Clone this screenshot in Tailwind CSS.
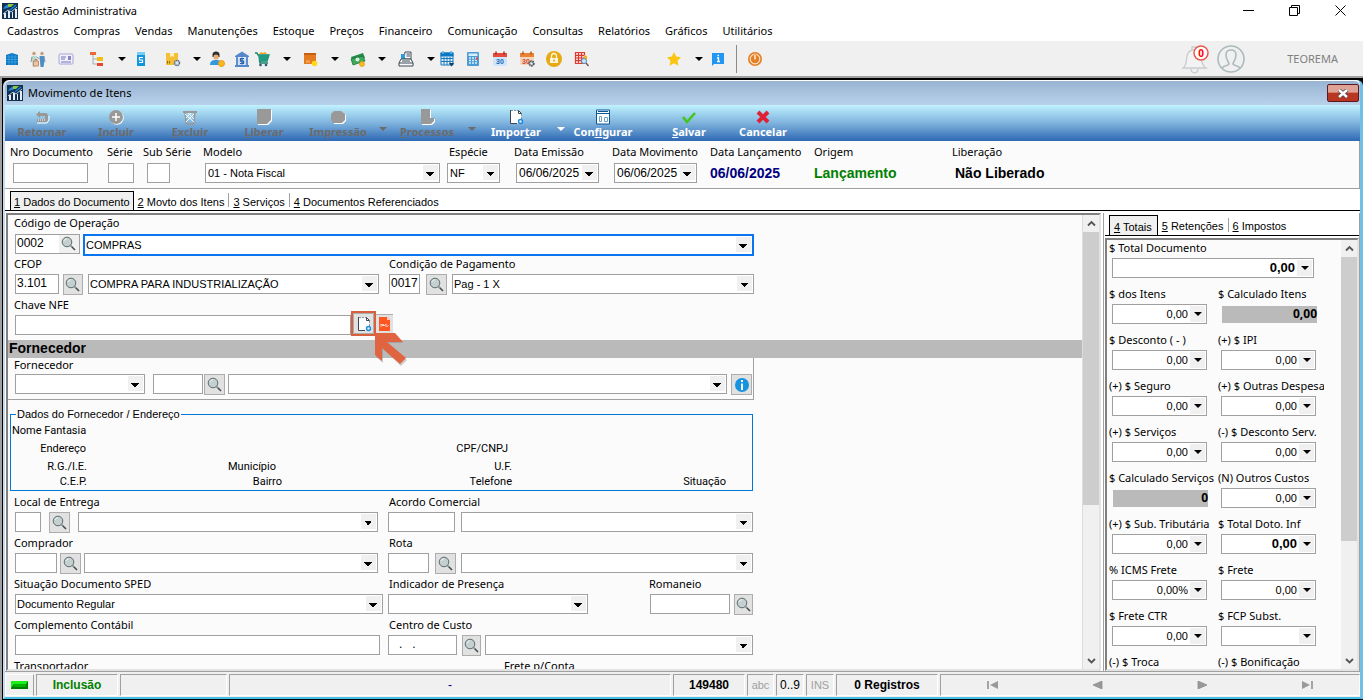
<!DOCTYPE html>
<html lang="pt-BR">
<head>
<meta charset="utf-8">
<meta name="viewport" content="width=device-width, initial-scale=1">
<title>Gestão Administrativa</title>
<script src="https://cdn.jsdelivr.net/npm/@tailwindcss/browser@4"></script>
</head>
<body class="flex h-screen flex-col overflow-hidden bg-white font-['Noto_Sans',sans-serif] text-[11px] leading-4 text-black">

<!-- Shared icons -->
<svg class="hidden">
  <symbol id="lupa" viewBox="0 0 16 16"><path d="M10 10l4 4" stroke="#3f4c50" stroke-width="1.600"/><path d="M9.500 9.500l1.500 1.500" stroke="#8b9699" stroke-width="1.600"/><circle cx="6" cy="6" r="4.800" fill="#c4d0d0" stroke="#5c6a6c"/><path d="M3 5a3.500 3.500 0 0 1 3-2.300" stroke="#eef4f4" fill="none"/></symbol>
  <symbol id="seta" viewBox="0 0 8 4"><path d="M0 0h8L4 4z" fill="currentColor"/></symbol>
  <symbol id="logo" viewBox="0 0 16 16"><path d="M0 0h16v16H0z" fill="#12304f"/><path d="M1 6c2-4 5-5 9-5l-4 4z" fill="#2686dc"/><path d="M6 1h6L9 4H6z" fill="#8dc63f"/><path d="M8 7l6-5" stroke="#0a84d8" stroke-width="1.500"/><path d="M2 15v-5h2v5zM6 15V8h2v7zM10 15V9h1v6zM13 15V6h2v9z" fill="#e6edf4"/><path d="M1 11l5-4 3 2 6-5" stroke="#b8cbdc" fill="none"/></symbol>
  <symbol id="cima" viewBox="0 0 9 9"><path d="M1 6.500L4.500 3 8 6.500" fill="none" stroke="#555" stroke-width="1.800"/></symbol>
  <symbol id="baixo" viewBox="0 0 9 9"><path d="M1 3l3.500 3.500L8 3" fill="none" stroke="#555" stroke-width="1.800"/></symbol>
  <symbol id="folha" viewBox="0 0 16 16"><path d="M2.500 1.500h8l3 3v10h-11z" fill="#fff"/><path d="M2.500 1v13.500H9" fill="none" stroke="#3d4650"/><path d="M3 1.500h7M13.500 5v5" stroke="#8a939c" stroke-dasharray="2 1"/><path d="M10.500 1.500v3h3z" fill="#fff" stroke="#3d4650"/><circle cx="12.500" cy="12.500" r="2" fill="#d8efff" stroke="#1e88d8" stroke-width="1.400"/></symbol>
</svg>

<!-- Application title bar -->
<header class="flex h-[22px] shrink-0 items-center justify-between pl-0.5">
  <h1 class="flex items-center gap-[5px]"><svg class="size-4"><use href="#logo"/></svg>Gestão Administrativa</h1>
  <div class="flex pb-0.5 [&_button]:grid [&_button]:h-5 [&_button]:w-[46px] [&_button]:place-items-center">
    <button aria-label="Minimizar"><svg class="size-[11px]" viewBox="0 0 11 11"><path d="M0 5.500h11" stroke="#000"/></svg></button>
    <button aria-label="Restaurar"><svg class="size-[11px]" viewBox="0 0 11 11"><path d="M.5 2.500h8v8h-8zM2.500 2V.500h8v8H9" fill="none" stroke="#000"/></svg></button>
    <button aria-label="Fechar"><svg class="size-[11px]" viewBox="0 0 11 11"><path d="M.5.500l10 10M10.500.500l-10 10" stroke="#000"/></svg></button>
  </div>
</header>

<nav class="flex h-[19px] shrink-0 items-center gap-[15px] pb-px pl-[7px]">
  <button>Cadastros</button><button>Compras</button><button>Vendas</button><button>Manutenções</button><button>Estoque</button><button>Preços</button><button>Financeiro</button><button>Comunicação</button><button>Consultas</button><button>Relatórios</button><button>Gráficos</button><button>Utilitários</button>
</nav>

<!-- Icon toolbar -->
<div class="flex h-[35px] shrink-0 items-center bg-[#f0f0f0] pl-0.5 [&_button]:grid [&_button]:h-5 [&_button]:w-5 [&_button]:shrink-0 [&_button]:place-items-center [&_button>svg]:size-4 [&_button.m]:w-3 [&_button.m>svg]:h-1 [&_button.m>svg]:w-2">
  <button aria-label="Empresa"><svg viewBox="0 0 16 16"><path d="M2 4l6-2 6 2v10H2z" fill="#0b76c4"/><path d="M2 6h12M2 8.500h12M2 11h12M5 4v10M8 3v11M11 4v10" stroke="#4db1ee" stroke-width=".6"/></svg></button>
  <button class="ml-1.5" aria-label="Clientes"><svg viewBox="0 0 16 16"><circle cx="4" cy="2.500" r="1.700" fill="#c99b74"/><circle cx="12" cy="2.500" r="1.700" fill="#c99b74"/><path d="M1.500 5h5v5l-1 6h-3z" fill="#b9dbc9"/><path d="M9.500 5h5v5l-1 6h-3z" fill="#4c8fc2"/><path d="M6.500 6l3 2M14 6l1 5M2 6l-1 5" stroke="#7f94a8"/><path d="M3.500 10h5v5h-5z" fill="#eac3a8" stroke="#c07a5a" stroke-width=".8"/><path d="M5 10V8.500h2V10" fill="none" stroke="#c07a5a"/></svg></button>
  <button class="ml-2" aria-label="Cartão"><svg viewBox="0 0 16 16"><rect x="1" y="3" width="14" height="10" rx="1" fill="#f2f1fb" stroke="#a8a4d4"/><path d="M3 6h5M3 8h4M3 11h10" stroke="#7470ba"/><path d="M10 5h3v4h-3z" fill="#8983cc"/></svg></button>
  <button class="ml-[11px]" aria-label="Estrutura"><svg viewBox="0 0 16 16"><path d="M4 4v9h4M4 8h5" fill="none" stroke="#a4adb5"/><path d="M1 1h6v3H1z" fill="#ed6a35"/><path d="M8 6h6v4H8z" fill="#f4bd15"/><path d="M8 12h6v3H8z" fill="#e3472c"/></svg></button>
  <button class="m ml-[9px]" aria-label="Mais opções de estrutura"><svg><use href="#seta"/></svg></button>
  <button class="ml-[3px]" aria-label="Serviços"><svg viewBox="0 0 16 16"><path d="M4 1h8v3H4z" fill="#77cdf3"/><path d="M4 4h8v11H4z" fill="#1295df"/><path d="M10 6.500H6.500V9h3v2.500H6" fill="none" stroke="#fff" stroke-width="1.200"/></svg></button>
  <button class="ml-3" aria-label="Produtos"><svg viewBox="0 0 16 16"><path d="M1 2h12v12H1z" fill="#f3bf38"/><path d="M5 2h4v4l-2-1-2 1z" fill="#fff0b7"/><path d="M2.500 12.500V10M4.500 12.500V10" stroke="#8f6a12"/><circle cx="12" cy="12" r="2.500" fill="#dbe6f2" stroke="#5d7288" stroke-width="1.500" stroke-dasharray="1.500 .5"/></svg></button>
  <button class="m ml-2" aria-label="Mais opções de produtos"><svg><use href="#seta"/></svg></button>
  <button class="ml-1" aria-label="Usuário financeiro"><svg viewBox="0 0 16 16"><path d="M3.500 6V3.500C3.500 1.500 5 .5 7 .5s3.500 1 3.500 3V6z" fill="#303030"/><circle cx="7" cy="6" r="2.600" fill="#e7ae78"/><path d="M1 14c0-4 2.500-5 6-5s6 1 6 5z" fill="#3299dc"/><circle cx="12.500" cy="12.500" r="3" fill="#f9b820" stroke="#e99b10"/></svg></button>
  <button class="ml-[5px]" aria-label="Banco"><svg viewBox="0 0 16 16"><path d="M1 5l7-4.500L15 5v1H1z" fill="#5487cc"/><path d="M2 7h12v7H2z" fill="#cfe1f6"/><path d="M3 6v8M13 6v8M1 15h14" stroke="#5487cc" stroke-width="1.800"/><path d="M10 7.500H6.500v2.700h3v2.300H6M8 6.500v7" fill="none" stroke="#2862ae" stroke-width="1.200"/></svg></button>
  <button aria-label="Carrinho"><svg viewBox="0 0 16 16"><path d="M5 3l2-2 2 1 2-1 2 2z" fill="#f3a31c"/><path d="M1 2h2l1 2h11l-2 6H5.500L6 12h8" fill="none" stroke="#16816c" stroke-width="1.300"/><path d="M4 4h11l-2 6H5z" fill="#209b82"/><circle cx="6.500" cy="14" r="1.300" fill="#26586b"/><circle cx="12" cy="14" r="1.300" fill="#26586b"/></svg></button>
  <button class="m ml-[9px]" aria-label="Mais opções de compra"><svg><use href="#seta"/></svg></button>
  <button class="ml-[7px]" aria-label="Estoque"><svg viewBox="0 0 16 16"><path d="M2 2h12v11H2z" fill="#e37b20"/><path d="M2 2h12v2H2z" fill="#c55f12"/><path d="M4 9h4v3H4z" fill="#f09b49"/><circle cx="12.500" cy="12.500" r="2.800" fill="#ffd71d"/></svg></button>
  <button class="m ml-[9px]" aria-label="Mais opções de estoque"><svg><use href="#seta"/></svg></button>
  <button class="ml-[7px]" aria-label="Dinheiro"><svg viewBox="0 0 16 16"><path d="M1 6l12-4 2 5-12 5z" fill="#258a48"/><path d="M1 8l12-3 2 5-12 4z" fill="#3da95c" stroke="#176b34" stroke-width=".7"/><circle cx="7.500" cy="8.500" r="2" fill="#d6f0d6"/><circle cx="12" cy="13" r="2.500" fill="#fabd22" stroke="#e1950a" stroke-width=".7"/></svg></button>
  <button class="m ml-2" aria-label="Mais opções financeiras"><svg><use href="#seta"/></svg></button>
  <button class="ml-2" aria-label="Caixa"><svg viewBox="0 0 16 16"><path d="M7 1h6v7H6zM8.500 3H12M8.500 5H12" fill="#fff" stroke="#3d4854"/><path d="M3 3h4v5H3z" fill="#2e9ae2"/><path d="M3 8h10l2 4v3H1v-3zM1 12h14M4 10h8" fill="#f7fbff" stroke="#3d4854"/></svg></button>
  <button class="m ml-[9px]" aria-label="Mais opções de caixa"><svg><use href="#seta"/></svg></button>
  <button aria-label="Agenda"><svg viewBox="0 0 16 16"><path d="M2 2h12v12H2z" fill="#e2f1fb" stroke="#1a78bd"/><path d="M1.500 1.500h13v4h-13z" fill="#0d78c2"/><path d="M4 0v3M12 0v3" stroke="#57b4ec" stroke-width="1.500"/><path d="M2 7.500h12M2 10.500h12M5 6v8M8 6v8M11 6v8" stroke="#1a78bd"/><path d="M10 12h5l-2.500 3.500z" fill="#183f60"/></svg></button>
  <button class="ml-[6px]" aria-label="Calculadora"><svg viewBox="0 0 16 16"><rect x="2" y="1" width="12" height="14" rx="1" fill="#4d9ad5"/><path d="M3.500 2.500h9v2.500h-9z" fill="#d4effd"/><path d="M4 7h8M4 9.500h8M4 12h8" stroke="#d4effd" stroke-width="1.500" stroke-dasharray="2 1"/><path d="M11 6.500h2v2h-2z" fill="#df4937"/></svg></button>
  <button class="ml-[7px]" aria-label="Calendário"><svg viewBox="0 0 16 16"><rect x="1" y="2" width="14" height="13" rx="2" fill="#cfe5fb"/><path d="M1 2h14v4H1z" fill="#e54a3d"/><path d="M4 .5v3M12 .5v3" stroke="#9e2920" stroke-width="1.400"/><text x="8" y="13" text-anchor="middle" font-family="Liberation Sans" font-weight="bold" font-size="7" fill="#1769b5">30</text></svg></button>
  <button class="ml-[7px]" aria-label="Configurar calendário"><svg viewBox="0 0 16 16"><rect x="1" y="2" width="14" height="12" rx="2" fill="#f2d5bc"/><path d="M1 2h14v4H1z" fill="#e98233"/><path d="M4 .5v3M12 .5v3" stroke="#a6561a" stroke-width="1.400"/><text x="7" y="13" text-anchor="middle" font-family="Liberation Sans" font-weight="bold" font-size="7" fill="#d24b30">30</text><circle cx="12.500" cy="12.500" r="2.200" fill="#eee" stroke="#4c5964" stroke-width="2" stroke-dasharray="1.500 .5"/></svg></button>
  <button class="ml-[7px]" aria-label="Bloquear"><svg viewBox="0 0 16 16"><circle cx="8" cy="8" r="8" fill="#e8aa14"/><path d="M5.500 7V5a2.500 2.500 0 0 1 5 0v2" fill="none" stroke="#fff5d4" stroke-width="1.300"/><path d="M4 7h8v5H4z" fill="#fff5d4"/><path d="M8 8.500v2" stroke="#c98a08" stroke-width="1.300"/></svg></button>
  <button class="ml-[7px]" aria-label="Pesquisar planilha"><svg viewBox="0 0 16 16"><path d="M2.500 1.500h9v11h-9zM5.500 1.500v11M8.500 1.500v11M2.500 4.300h9M2.500 7h9M2.500 9.700h9" fill="#fde2df" stroke="#db3c34" stroke-width="1.200"/><path d="M11 4l3 1v4h-3z" fill="#f3b21d"/><circle cx="11" cy="10" r="2.500" fill="#c5e6fa" stroke="#5b91b8"/><path d="M13 12l2.500 3" stroke="#6b4a40" stroke-width="1.200"/></svg></button>
  <button class="ml-[73px]" aria-label="Favoritos"><svg viewBox="0 0 16 16"><path d="M8 1l2.200 4.600 4.800.7-3.500 3.500.9 5L8 12.300 3.600 14.800l.9-5L1 6.300l4.800-.7z" fill="#fcc510"/></svg></button>
  <button class="m ml-[9px]" aria-label="Mais favoritos"><svg><use href="#seta"/></svg></button>
  <button class="ml-[3px]" aria-label="Informações"><svg viewBox="0 0 16 16"><path d="M2 2h12v11H4l-2 2z" fill="#2196f3"/><path d="M7.500 4.500h1.500M7 7h1.500v3.500M7 10.500h3" stroke="#fff" stroke-width="1.300" fill="none"/></svg></button>
  <span class="ml-2 h-7 w-px bg-[#8a8a8a]"></span>
  <button class="ml-2" aria-label="Sair"><svg viewBox="0 0 16 16"><circle cx="8" cy="8" r="7" fill="#e67e22"/><circle cx="8" cy="8" r="4.800" fill="none" stroke="#fbe3cc" stroke-width="1.200"/><path d="M8 3.500v5" stroke="#e67e22" stroke-width="3"/><path d="M8 4v4.500" stroke="#fff" stroke-width="1.300"/></svg></button>

  <div class="ml-auto flex items-center pr-[25px] text-[#7f7f7f]">
    <svg class="h-8 w-7" viewBox="0 0 28 32" role="img" aria-label="0 notificações"><path d="M2 25c4-3 3-7 4-12 1-4 4-6 7-6s6 2 7 6c1 5 0 9 5 12z" fill="#f3f3f3" stroke="#c9cdcf" stroke-width="1.300"/><path d="M10 26c0 5 7 5 7 0M11 7V4h4v3" fill="none" stroke="#c9cdcf" stroke-width="1.300"/><circle cx="20" cy="10" r="7" fill="#fff" stroke="#e75a4f" stroke-width="1.500"/><text x="20" y="14" text-anchor="middle" font-family="Noto Sans" font-size="10" font-weight="bold" fill="#f00">0</text></svg>
    <svg class="ml-2 size-7" viewBox="0 0 28 28"><circle cx="14" cy="14" r="13" fill="none" stroke="#adbabd" stroke-width="1.600"/><path d="M5 23c2-3 7-2 7-4 0-2-3-4-3-9 0-3 2-5 5-5s5 2 5 5c0 5-3 7-3 9 0 2 5 1 7 4" fill="none" stroke="#adbabd" stroke-width="1.600"/></svg>
    <span class="ml-[42px]">TEOREMA</span>
  </div>
</div>

<!-- Document window -->
<main class="flex min-h-0 flex-1 flex-col border-t-2 border-l-2 border-t-[#a0a0a0] border-l-[#a0a0a0] bg-black pb-px">
 <section class="mt-0.5 ml-px flex min-h-0 flex-1 flex-col rounded-t-md border-r-[3px] border-b-2 border-l-2 border-r-[#6fbfe6] border-b-[#45bfe6] border-l-[#c5daee] bg-white">
  <div class="flex h-[25px] shrink-0 items-center justify-between rounded-t-md border-t border-t-white bg-linear-to-b from-[#98b4d2] to-[#b9d1ea] pr-px pl-0.5">
    <h2 class="flex items-center gap-[5px]"><svg class="size-4"><use href="#logo"/></svg>Movimento de Itens</h2>
    <button aria-label="Fechar janela" class="grid h-[18px] w-8 place-items-center rounded-xs border border-[#5b1a22] bg-linear-to-b from-[#e0a294] from-45% to-[#b93622] to-50%"><svg class="h-[9px] w-3" viewBox="0 0 12 9"><path d="M2 1l8 7M10 1L2 8" stroke="#4a4a55" stroke-width="4"/><path d="M2 1l8 7M10 1L2 8" stroke="#fff" stroke-width="2.400"/></svg></button>
  </div>

  <!-- Actions -->
  <div class="flex h-9 shrink-0 bg-linear-to-b from-[#c0f2fe] via-[#7fb3dd] to-[#2e69b3] font-bold text-white [&_button]:flex [&_button]:w-[74px] [&_button]:shrink-0 [&_button]:flex-col [&_button]:items-center [&_button]:pt-1 [&_button]:leading-[14px] [&_button.m]:w-[15px] [&_button.m]:pt-[22px] [&_button.m>svg]:h-1 [&_button.m>svg]:w-2 [&_button:disabled]:text-[#6b6b6b] [&_svg]:size-4">
    <button disabled><svg viewBox="0 0 16 16"><path d="M6 2L2 5.500 6 9V7h5v3H3v3h8c2 0 3-1 3-3V7c0-2-1-3-3-3H6z" fill="#999"/><path d="M4 11h8" stroke="#fff" stroke-dasharray="1 1"/><path d="M15 7v4l-2 3H3" fill="none" stroke="#fff"/></svg><span>Retornar</span></button>
    <button disabled><svg viewBox="0 0 16 16"><circle cx="8.800" cy="8.800" r="7" fill="#fff"/><circle cx="8" cy="8" r="7" fill="#999"/><path d="M8 4v8M4 8h8" stroke="#fff" stroke-width="1.500"/></svg><span><u>I</u>ncluir</span></button>
    <button disabled><svg viewBox="0 0 16 16"><path d="M1 2h14v2H1z" fill="#999"/><path d="M3 4l1.500 11h7L13 4" fill="none" stroke="#999" stroke-width="1.600"/><path d="M3 5l9 8M12 5l-8 8M6 4l6 6M9 4l-5 5" stroke="#fff"/></svg><span><u>E</u>xcluir</span></button>
    <button disabled><svg viewBox="0 0 16 16"><path d="M2 1h14v11l-4 4H2z" fill="#fff"/><path d="M1 0h14v11l-4 4H1z" fill="#999"/></svg><span><u>L</u>iberar</span></button>
    <button disabled><svg viewBox="0 0 16 16"><path d="M4 4l2-1h6l4 3v6l-3 3H4z" fill="#fff"/><path d="M1 5l3-3h7l4 3v6l-3 3H3l-2-3z" fill="#999"/></svg><span>Im<u>p</u>ressão</span></button>
    <button class="m" disabled aria-label="Opções de impressão"><svg><use href="#seta"/></svg></button>
    <button disabled><svg viewBox="0 0 16 16"><path d="M3 1h9v9h4v3l-3 3H3z" fill="#fff"/><path d="M2 0h9v9h4v3l-3 3H2z" fill="#999"/></svg><span><u>P</u>rocessos</span></button>
    <button class="m" disabled aria-label="Opções de processos"><svg><use href="#seta"/></svg></button>
    <button><svg><use href="#folha"/></svg><span>Impor<u>t</u>ar</span></button>
    <button class="m" aria-label="Opções de importação"><svg><use href="#seta"/></svg></button>
    <button class="w-[70px]!"><svg viewBox="0 0 16 16"><path d="M1.500 1h13v14h-13z" fill="#fff" stroke="#0c5796"/><path d="M1 4.500h14M3 2.500h10" stroke="#0c5796"/><path d="M4.500 7.500h2v5h-2zM9.500 8.500h3v4h-3z" fill="none" stroke="#6ea0c6"/></svg><span>Con<u>f</u>igurar</span></button>
    <button class="ml-3.5"><svg viewBox="0 0 16 16"><path d="M2 8l4 5 8-9" fill="none" stroke="#44c51d" stroke-width="2.600"/></svg><span><u>S</u>alvar</span></button>
    <button><svg viewBox="0 0 16 16"><path d="M3 3l10 10M13 3L3 13" stroke="#df2335" stroke-width="4"/></svg><span>Cancelar</span></button>
  </div>

  <!-- Document header -->
  <div class="grid h-[48px] shrink-0 grid-cols-[97px_36px_60px_244px_67px_98px_98px_104px_138px_1fr] border-r border-b border-[#a0a0a0] bg-[#fbfbfb] pt-0.5 pl-[5px] [&_input]:block [&_input]:h-5 [&_input]:border [&_input]:border-[#a0a0a0] [&_input]:bg-white [&_label]:block [&_label]:h-5 [&_label]:leading-[18px] [&_label]:whitespace-nowrap [&_select]:block [&_select]:h-5 [&_select]:appearance-none [&_select]:border [&_select]:border-[#a0a0a0] [&_select]:bg-white [&_select]:bg-[conic-gradient(from_315deg_at_4px_4px,black_90deg,transparent_0),linear-gradient(#f0f0f0,#f0f0f0)] [&_select]:bg-[size:8px_4px,15px_15px] [&_select]:bg-[position:right_5px_top_8px,right_1px_top_1px] [&_select]:bg-no-repeat [&_select]:pl-0.5 [&_select]:font-['Liberation_Sans',sans-serif] [&_output]:font-['Liberation_Sans',sans-serif] [&_output]:text-sm [&_output]:leading-5 [&_output]:font-bold">
    <div><label for="nro">Nro Documento</label><input id="nro" class="ml-[3px] w-[75px]"></div>
    <div><label for="serie">Série</label><input id="serie" class="ml-px w-[26px]"></div>
    <div><label for="sub">Sub Série</label><input id="sub" class="ml-1 w-[23px]"></div>
    <div><label for="modelo">Modelo</label><select id="modelo" class="ml-0.5 w-[235px]"><option>01 - Nota Fiscal</option></select></div>
    <div><label for="especie" class="pl-0.5">Espécie</label><select id="especie" class="w-[53px]"><option>NF</option></select></div>
    <div><label for="emissao">Data Emissão</label><select id="emissao" class="ml-0.5 w-[83px] text-xs"><option>06/06/2025</option></select></div>
    <div><label for="movto">Data Movimento</label><select id="movto" class="ml-0.5 w-[83px] text-xs"><option>06/06/2025</option></select></div>
    <div><label for="lanc">Data Lançamento</label><output id="lanc" class="text-[#000080]">06/06/2025</output></div>
    <div><label for="origem">Origem</label><output id="origem" class="text-[#008000]">Lançamento</output></div>
    <div><label for="liber">Liberação</label><output id="liber" class="pl-[3px]">Não Liberado</output></div>
  </div>

  <div role="tablist" class="flex h-[22px] shrink-0 items-end border-b border-black pl-[5px] font-['Liberation_Sans',sans-serif] [&_button]:h-[19px] [&_button]:px-1 [&_button]:pt-0.5">
    <button role="tab" aria-selected="true" class="border-x border-t border-black bg-[#f0f0f0] px-[3px]!"><u>1</u> Dados do Documento</button>
    <button role="tab"><u>2</u> Movto dos Itens</button>
    <span class="mb-[3px] h-3.5 w-px bg-[#a0a0a0]"></span>
    <button role="tab"><u>3</u> Serviços</button>
    <span class="mb-[3px] h-3.5 w-px bg-[#a0a0a0]"></span>
    <button role="tab"><u>4</u> Documentos Referenciados</button>
  </div>

  <div class="flex min-h-0 flex-1 pt-0.5">
   <!-- Document data form -->
   <div class="ml-px flex min-w-0 flex-1 border-2 border-t-[#808080] border-r-[#e3e3e3] border-b-[#e3e3e3] border-l-[#808080] bg-[#fbfbfb]">
    <form class="min-w-0 flex-1 overflow-hidden [&_.r]:flex [&_.r]:items-start [&_.b]:grid [&_.b]:h-[21px] [&_.b]:shrink-0 [&_.b]:place-items-center [&_.b]:border [&_.b]:border-[#adadad] [&_.b]:bg-[#e1e1e1] [&_.b>svg]:size-4 [&_input]:h-5 [&_input]:shrink-0 [&_input]:border [&_input]:border-[#a0a0a0] [&_input]:bg-white [&_input]:px-px [&_input]:pb-0.5 [&_input]:font-['Liberation_Sans',sans-serif] [&_input]:text-xs [&_label]:block [&_label]:h-[18px] [&_label]:leading-4 [&_label]:whitespace-nowrap [&_select]:h-5 [&_select]:shrink-0 [&_select]:appearance-none [&_select]:border [&_select]:border-[#a0a0a0] [&_select]:bg-white [&_select]:bg-[conic-gradient(from_315deg_at_4px_4px,black_90deg,transparent_0),linear-gradient(#f0f0f0,#f0f0f0)] [&_select]:bg-[size:8px_4px,15px_15px] [&_select]:bg-[position:right_5px_top_8px,right_1px_top_1px] [&_select]:bg-no-repeat [&_select]:pl-px [&_select]:font-['Liberation_Sans',sans-serif]">
      <div class="h-[41px] pl-1.5">
        <label for="codop">Código de Operação</label>
        <div class="r pt-px pl-px">
          <div class="flex w-[65px] border border-[#a0a0a0] bg-white [&>input]:h-[18px]! [&>input]:border-0!"><input id="codop" class="w-[43px]" value="0002"><button type="button" aria-label="Buscar operação" class="grid w-5 place-items-center bg-[#f0f0f0]"><svg class="size-4"><use href="#lupa"/></svg></button></div>
          <div class="ml-[3px] border-2 border-[#0a75f0]"><select aria-label="Operação" class="block h-[18px]! w-[667px] border-0!"><option>COMPRAS</option></select></div>
        </div>
      </div>
      <div class="flex h-[41px] pl-1.5">
        <div class="w-[375px]"><label for="cfop">CFOP</label>
          <div class="r pl-px"><input id="cfop" class="w-[44px]" value="3.101"><button type="button" aria-label="Buscar CFOP" class="b ml-1 w-[20px]"><svg><use href="#lupa"/></svg></button><select aria-label="Descrição CFOP" class="ml-[5px] w-[291px]"><option>COMPRA PARA INDUSTRIALIZAÇÃO</option></select></div></div>
        <div><label for="cond">Condição de Pagamento</label>
          <div class="r"><input id="cond" class="w-[31px]" value="0017"><button type="button" aria-label="Buscar condição" class="b ml-[6px] w-[21px]"><svg><use href="#lupa"/></svg></button><select aria-label="Condição" class="ml-[5px] w-[302px]"><option>Pag - 1 X</option></select></div></div>
      </div>
      <div class="h-[43px] pl-1.5">
        <label for="chave">Chave NFE</label>
        <div class="r pl-px"><input id="chave" class="w-[336px]">
          <div class="relative -mt-1 h-[25px] w-[25px] border-2 border-[#d9603f]"><button type="button" aria-label="Importar chave" class="b w-[21px]"><svg><use href="#folha"/></svg></button>
            <svg class="absolute top-[18px] left-[20px] z-10 h-9 w-9" viewBox="0 0 36 36"><path d="M3 4v22l7 6V18l18 17 6-6-19-17h15l-8-8z" fill="#777" opacity=".35"/><path d="M2 2v22l7 6V17l18 16 6-6-19-16h16l-8-9z" fill="#e06440"/></svg></div>
          <button type="button" aria-label="PDF" class="-mt-px grid h-[19px] w-[17px] place-items-center border-t border-[#adadad] bg-[#e1e1e1]"><svg class="h-3.5 w-[11px]" viewBox="0 0 11 14"><path d="M0 0h8l3 3v11H0z" fill="#ff5722"/><path d="M8 0v3h3z" fill="#ffd0c0"/><path d="M2 10V7l2 2V7l1 2 2-2v3M8 10l1.500-2" fill="none" stroke="#fff" stroke-width=".7"/></svg></button></div>
      </div>

      <h3 class="h-[18px] bg-[#bababa] pl-px font-['Liberation_Sans',sans-serif] text-sm leading-[17px] font-bold">Fornecedor</h3>
      <div class="h-[42px] w-[746px] border-r border-b border-[#a0a0a0] pl-1.5">
        <label for="forn" class="h-4! leading-[14px]!">Fornecedor</label>
        <div class="r pl-px"><select id="forn" class="w-[130px]"></select><input aria-label="Código do fornecedor" class="ml-2 w-[50px]"><button type="button" aria-label="Buscar fornecedor" class="b ml-px w-[21px]"><svg><use href="#lupa"/></svg></button><select aria-label="Nome do fornecedor" class="ml-[3px] w-[499px]"></select><button type="button" aria-label="Informações do fornecedor" class="b ml-1 w-[21px]"><svg viewBox="0 0 16 16"><circle cx="8" cy="8" r="7" fill="#1694e0"/><path d="M8 3v2M8 6.500V13" stroke="#fff" stroke-width="2"/></svg></button></div>
      </div>

      <fieldset class="mt-[7px] ml-0.5 h-[84px] w-[743px] border border-[#0078d7] font-['Roboto',sans-serif] leading-4">
        <legend class="ml-[5px] h-3.5 px-px font-['Liberation_Sans',sans-serif] leading-[14px]">Dados do Fornecedor / Endereço</legend>
        <div class="grid grid-cols-[76px_195px_230px_230px] grid-rows-[18px_18px_15px_15px] pt-0.5 text-right [&>span]:whitespace-nowrap">
          <span class="pl-px text-left">Nome Fantasia</span>
          <span class="col-start-1 pr-px">Endereço</span><span class="col-start-3 pr-1">CPF/CNPJ</span>
          <span class="col-start-1">R.G./I.E.</span><span class="pr-1.5">Município</span><span>U.F.</span>
          <span class="col-start-1">C.E.P.</span><span>Bairro</span><span>Telefone</span><span class="pr-4">Situação</span>
        </div>
      </fieldset>

      <div class="mt-[3px] flex h-[41px] pl-1.5">
        <div class="w-[374px]"><label for="local">Local de Entrega</label>
          <div class="r pl-px"><input id="local" class="w-[26px]"><button type="button" aria-label="Buscar local" class="b ml-2 w-[21px]"><svg><use href="#lupa"/></svg></button><select aria-label="Local" class="ml-2 w-[300px]"></select></div></div>
        <div><label for="acordo" class="pl-px">Acordo Comercial</label>
          <div class="r"><input id="acordo" class="w-[67px]"><select aria-label="Acordo" class="ml-1.5 w-[292px]"></select></div></div>
      </div>
      <div class="flex h-[41px] pl-1.5">
        <div class="w-[374px]"><label for="compr">Comprador</label>
          <div class="r pl-px"><input id="compr" class="w-[42px]"><button type="button" aria-label="Buscar comprador" class="b ml-[3px] w-[21px]"><svg><use href="#lupa"/></svg></button><select aria-label="Nome do comprador" class="ml-[3px] w-[294px]"></select></div></div>
        <div><label for="rota" class="pl-px">Rota</label>
          <div class="r"><input id="rota" class="w-[41px]"><button type="button" aria-label="Buscar rota" class="b ml-1.5 w-[21px]"><svg><use href="#lupa"/></svg></button><select aria-label="Nome da rota" class="ml-[5px] w-[292px]"></select></div></div>
      </div>
      <div class="flex h-[41px] pl-1.5">
        <div class="w-[374px]"><label for="sped">Situação Documento SPED</label>
          <div class="r pl-px"><select id="sped" class="w-[368px]"><option>Documento Regular</option></select></div></div>
        <div class="w-[261px]"><label for="presenca" class="pl-px">Indicador de Presença</label>
          <div class="r"><select id="presenca" class="w-[200px]"></select></div></div>
        <div><label for="romaneio">Romaneio</label>
          <div class="r pl-px"><input id="romaneio" class="w-[80px]"><button type="button" aria-label="Buscar romaneio" class="b ml-1 w-[19px]"><svg><use href="#lupa"/></svg></button></div></div>
      </div>
      <div class="flex h-[41px] pl-1.5">
        <div class="w-[374px]"><label for="compl">Complemento Contábil</label>
          <div class="r pl-px"><input id="compl" class="w-[365px]"></div></div>
        <div><label for="custo" class="pl-px">Centro de Custo</label>
          <div class="r"><input id="custo" class="w-[69px] pl-2.5!" value=".   ."><button type="button" aria-label="Buscar centro de custo" class="b ml-[5px] w-[19px]"><svg><use href="#lupa"/></svg></button><select aria-label="Nome do centro de custo" class="ml-1 w-[268px]"></select></div></div>
      </div>
      <div class="flex h-[41px] pl-1.5">
        <div class="w-[490px]"><label for="transp">Transportador</label><input id="transp" class="w-[130px]"></div>
        <div><label for="frete">Frete p/Conta</label><select id="frete" class="w-[130px]"></select></div>
      </div>
    </form>
    <div class="flex w-[17px] flex-col border-l border-[#dcdcdc] bg-[#f0f0f0]">
      <button aria-label="Rolar para cima" class="grid h-[17px] place-items-center"><svg class="size-[9px]"><use href="#cima"/></svg></button>
      <div class="min-h-0 flex-1"><div class="h-[65%] bg-[#cdcdcd]"></div></div>
      <button aria-label="Rolar para baixo" class="grid h-[17px] place-items-center"><svg class="size-[9px]"><use href="#baixo"/></svg></button>
    </div>
   </div>

   <!-- Totals -->
   <aside class="ml-0.5 flex w-[257px] shrink-0 flex-col border-x border-[#a0a0a0] pl-px">
    <div role="tablist" class="flex h-[23px] shrink-0 items-end border-b border-black pl-1 font-['Liberation_Sans',sans-serif] [&_button]:h-5 [&_button]:px-1 [&_button]:pt-0.5">
      <button role="tab" aria-selected="true" class="border-x border-t border-black bg-[#f0f0f0] pr-[5px]!"><u>4</u> Totais</button>
      <button role="tab"><u>5</u> Retenções</button>
      <span class="mb-[3px] h-3.5 w-px bg-[#a0a0a0]"></span>
      <button role="tab"><u>6</u> Impostos</button>
    </div>
    <div class="mt-0.5 flex min-h-0 flex-1 border-2 border-t-[#808080] border-r-[#e3e3e3] border-b-[#e3e3e3] border-l-[#808080] bg-[#fbfbfb]">
      <form class="grid min-w-0 flex-1 auto-rows-[46px] grid-cols-[106px_106px] gap-x-[3px] overflow-hidden pl-0.5 [&>div]:min-w-0 [&_label]:block [&_label]:h-[18px] [&_label]:overflow-hidden [&_label]:leading-4 [&_label]:whitespace-nowrap [&_.c]:ml-[3px] [&_.c]:flex [&_.c]:h-5 [&_.c]:w-[95px] [&_.c]:border [&_.c]:border-[#a0a0a0] [&_.c]:bg-white [&_.c]:p-px [&_input]:min-w-0 [&_input]:flex-1 [&_input]:pr-0.5 [&_input]:text-right [&_input]:font-['Liberation_Sans',sans-serif] [&_.c>button]:grid [&_.c>button]:w-[15px] [&_.c>button]:place-items-center [&_.c>button]:bg-[#f0f0f0] [&_.c>button>svg]:h-1 [&_.c>button>svg]:w-2 [&_output]:mt-0.5 [&_output]:ml-1 [&_output]:block [&_output]:h-[17px] [&_output]:w-[95px] [&_output]:bg-[#bababa] [&_output]:text-right [&_output]:text-xs [&_output]:leading-[15px] [&_output]:font-bold">
        <div class="col-span-2"><label for="t0">$ Total Documento</label><div class="c w-[202px]!"><input id="t0" class="text-[13px] font-bold" value="0,00"><button type="button" aria-label="Calcular total"><svg><use href="#seta"/></svg></button></div></div>
        <div><label for="t1">$ dos Itens</label><div class="c"><input id="t1" value="0,00"><button type="button" aria-label="Calcular itens"><svg><use href="#seta"/></svg></button></div></div>
        <div><label for="t2">$ Calculado Itens</label><output id="t2">0,00</output></div>
        <div><label for="t3">$ Desconto ( - )</label><div class="c"><input id="t3" value="0,00"><button type="button" aria-label="Calcular desconto"><svg><use href="#seta"/></svg></button></div></div>
        <div><label for="t4">(+) $ IPI</label><div class="c"><input id="t4" value="0,00"><button type="button" aria-label="Calcular IPI"><svg><use href="#seta"/></svg></button></div></div>
        <div><label for="t5">(+) $ Seguro</label><div class="c"><input id="t5" value="0,00"><button type="button" aria-label="Calcular seguro"><svg><use href="#seta"/></svg></button></div></div>
        <div><label for="t6">(+) $ Outras Despesas</label><div class="c"><input id="t6" value="0,00"><button type="button" aria-label="Calcular despesas"><svg><use href="#seta"/></svg></button></div></div>
        <div><label for="t7">(+) $ Serviços</label><div class="c"><input id="t7" value="0,00"><button type="button" aria-label="Calcular serviços"><svg><use href="#seta"/></svg></button></div></div>
        <div><label for="t8">(-) $ Desconto Serv.</label><div class="c"><input id="t8" value="0,00"><button type="button" aria-label="Calcular desconto de serviços"><svg><use href="#seta"/></svg></button></div></div>
        <div><label for="t9">$ Calculado Serviços</label><output id="t9">0</output></div>
        <div><label for="t10">(N) Outros Custos</label><div class="c"><input id="t10" value="0,00"><button type="button" aria-label="Calcular custos"><svg><use href="#seta"/></svg></button></div></div>
        <div><label for="t11">(+) $ Sub. Tributária</label><div class="c"><input id="t11" value="0,00"><button type="button" aria-label="Calcular substituição"><svg><use href="#seta"/></svg></button></div></div>
        <div><label for="t12">$ Total Doto. Inf</label><div class="c"><input id="t12" class="text-[13px] font-bold" value="0,00"><button type="button" aria-label="Calcular total informado"><svg><use href="#seta"/></svg></button></div></div>
        <div><label for="t13">% ICMS Frete</label><div class="c"><input id="t13" value="0,00%"><button type="button" aria-label="Calcular ICMS"><svg><use href="#seta"/></svg></button></div></div>
        <div><label for="t14">$ Frete</label><div class="c"><input id="t14" value="0,00"><button type="button" aria-label="Calcular frete"><svg><use href="#seta"/></svg></button></div></div>
        <div><label for="t15">$ Frete CTR</label><div class="c"><input id="t15" value="0,00"><button type="button" aria-label="Calcular frete CTR"><svg><use href="#seta"/></svg></button></div></div>
        <div><label for="t16">$ FCP Subst.</label><div class="c"><input id="t16"><button type="button" aria-label="Calcular FCP"><svg><use href="#seta"/></svg></button></div></div>
        <div><label for="t17">(-) $ Troca</label><div class="c"><input id="t17"></div></div>
        <div><label for="t18">(-) $ Bonificação</label><div class="c"><input id="t18"></div></div>
      </form>
      <div class="flex w-4 flex-col bg-[#f0f0f0]">
        <button aria-label="Rolar totais para cima" class="grid h-[17px] place-items-center"><svg class="size-[9px]"><use href="#cima"/></svg></button>
        <div class="min-h-0 flex-1"><div class="h-[72%] bg-[#cdcdcd]"></div></div>
        <button aria-label="Rolar totais para baixo" class="grid h-[17px] place-items-center"><svg class="size-[9px]"><use href="#baixo"/></svg></button>
      </div>
    </div>
   </aside>
  </div>

  <!-- Status bar -->
  <footer class="flex h-[26px] shrink-0 gap-0.5 border-t border-[#a0a0a0] bg-[#f0f0f0] pt-0.5 pb-px font-['Liberation_Sans',sans-serif] text-xs [&>div]:flex [&>div]:items-center [&>div]:justify-center [&>div]:border [&>div]:border-t-[#a0a0a0] [&>div]:border-r-white [&>div]:border-b-white [&>div]:border-l-[#a0a0a0]">
    <div class="w-[29px] border-t-white! border-r-[#a0a0a0]! border-l-white!"><svg class="h-2 w-[17px]" viewBox="0 0 17 8"><path d="M0 0h17v8H0z" fill="#007d00"/><path d="M0 0h17l-2 3H3L0 7z" fill="#19ef19"/><path d="M3 3h12v3H3z" fill="#00b000"/></svg></div>
    <div class="w-[82px] font-bold text-[#008000]">Inclusão</div>
    <div class="w-[107px]"></div>
    <div class="flex-1 text-[#000080]">-</div>
    <div class="w-[72px] font-bold">149480</div>
    <div class="w-[27px] text-[11px] text-[#a0a0a0]">abc</div>
    <div class="w-[28px]">0..9</div>
    <div class="w-[28px] text-[11px] text-[#a0a0a0]">INS</div>
    <div class="w-[102px] font-bold">0 Registros</div>
    <div class="grid! w-[420px] grid-cols-4 justify-items-center! [&_svg]:h-2 [&_svg]:w-3">
      <button aria-label="Primeiro"><svg viewBox="0 0 12 8"><path d="M1 0v8" stroke="#8b8b8b" stroke-width="1.500"/><path d="M11 0v8L3 4z" fill="#999"/></svg></button>
      <button aria-label="Anterior"><svg viewBox="0 0 12 8"><path d="M10 0v8L1 4z" fill="#999" stroke="#888" stroke-width=".7"/></svg></button>
      <button aria-label="Próximo"><svg viewBox="0 0 12 8"><path d="M2 0v8l9-4z" fill="#999" stroke="#888" stroke-width=".7"/></svg></button>
      <button aria-label="Último"><svg viewBox="0 0 12 8"><path d="M11 0v8" stroke="#8b8b8b" stroke-width="1.500"/><path d="M1 0v8l8-4z" fill="#999"/></svg></button>
    </div>
  </footer>
 </section>
</main>
</body>
</html>
